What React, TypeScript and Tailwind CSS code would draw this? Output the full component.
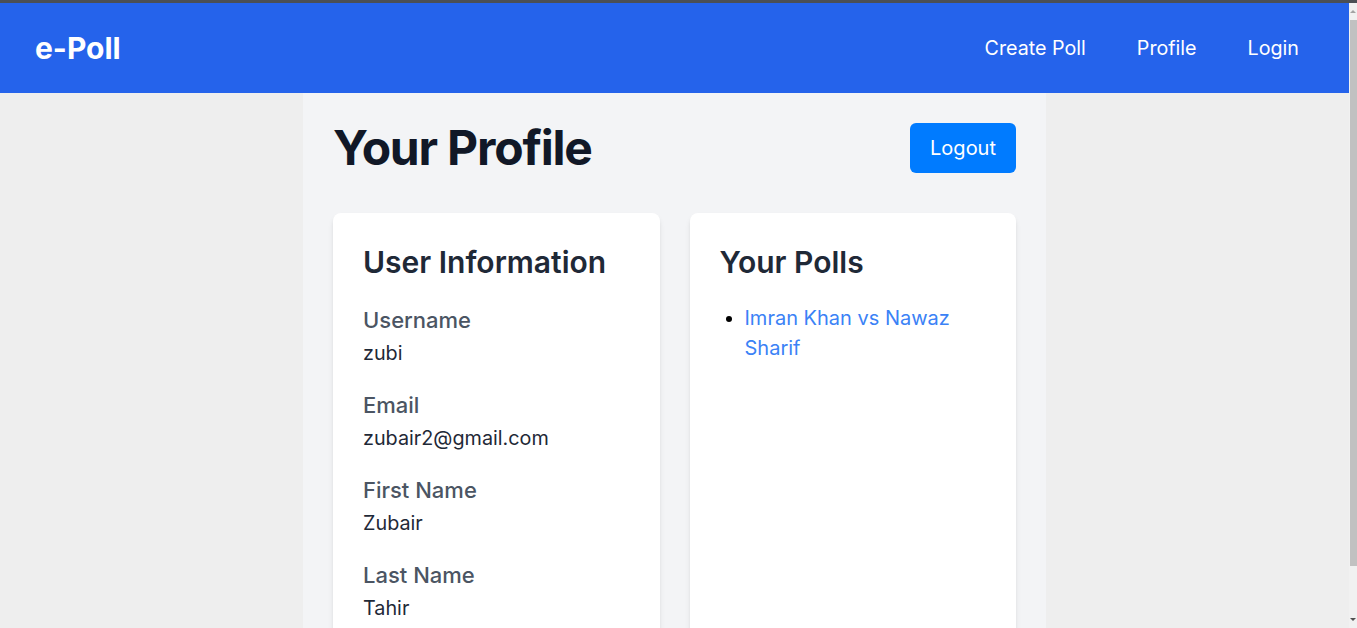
import React from "react";

function InfoRow({ label, value }: { label: string; value: string }) {
  return (
    <div className="mb-[22px]">
      <div className="text-[22px] leading-[30px] font-medium text-[#4b5563]">{label}</div>
      <div className="mt-[3px] text-[19.8px] leading-[30px] text-[#1f2937]">{value}</div>
    </div>
  );
}

export default function App() {
  return (
    <div
      className="flex h-screen flex-col overflow-hidden bg-[#eeeeee]"
      style={{ fontFamily: "Inter, 'Noto Sans', sans-serif" }}
    >
      <div className="h-[3px] shrink-0 bg-[#4b4f55]" />
      <div className="flex min-h-0 flex-1">
        <div className="flex min-w-0 flex-1 flex-col">
          <header className="flex h-[90px] shrink-0 items-center justify-between bg-[#2563eb] pl-[35px] pr-[50px]">
            <div className="text-[30px] font-bold leading-none text-white">e-Poll</div>
            <nav className="flex items-center gap-[51px] text-[19.7px] leading-[28px] text-white">
              <a>Create Poll</a>
              <a>Profile</a>
              <a>Login</a>
            </nav>
          </header>
          <main className="flex min-h-0 flex-1 justify-center">
            <div className="w-[743px] bg-[#f3f4f6] px-[30px] pt-[30px]">
              <div className="mb-[40px] flex h-[50px] items-center justify-between">
                <h1 className="text-[48px] font-bold leading-none tracking-tight text-[#111827]">Your Profile</h1>
                <button className="h-[50px] rounded-[6px] bg-[#007bff] px-[20px] text-[20px] text-white">
                  Logout
                </button>
              </div>
              <div className="grid grid-cols-2 gap-[30px]">
                <div className="h-[600px] rounded-[8px] bg-white px-[30px] pt-[31px] shadow-md">
                  <h2 className="mb-[25px] text-[30px] font-semibold leading-[36px] text-[#1f2937]">
                    User Information
                  </h2>
                  <InfoRow label="Username" value="zubi" />
                  <InfoRow label="Email" value="zubair2@gmail.com" />
                  <InfoRow label="First Name" value="Zubair" />
                  <InfoRow label="Last Name" value="Tahir" />
                </div>
                <div className="h-[600px] rounded-[8px] bg-white px-[30px] pt-[31px] shadow-md">
                  <h2 className="mb-[23px] text-[30px] font-semibold leading-[36px] text-[#1f2937]">
                    Your Polls
                  </h2>
                  <ul className="list-disc pl-[25px] text-[20px] leading-[30px]">
                    <li>
                      <a className="text-[#3b82f6]">Imran Khan vs Nawaz Sharif</a>
                    </li>
                  </ul>
                </div>
              </div>
            </div>
          </main>
        </div>
        <div className="relative flex w-[8px] shrink-0 flex-col bg-[#f1f1f1]">
          <div className="flex h-[17px] items-center justify-center">
            <div className="h-0 w-0 border-x-[3px] border-b-[3px] border-x-transparent border-b-[#a3a3a3]" />
          </div>
          <div className="ml-[1px] h-[546px] bg-[#c1c1c1]" />
          <div className="flex-1" />
          <div className="flex h-[17px] items-center justify-center">
            <div className="h-0 w-0 border-x-[3px] border-t-[3px] border-x-transparent border-t-[#505050]" />
          </div>
        </div>
      </div>
    </div>
  );
}
